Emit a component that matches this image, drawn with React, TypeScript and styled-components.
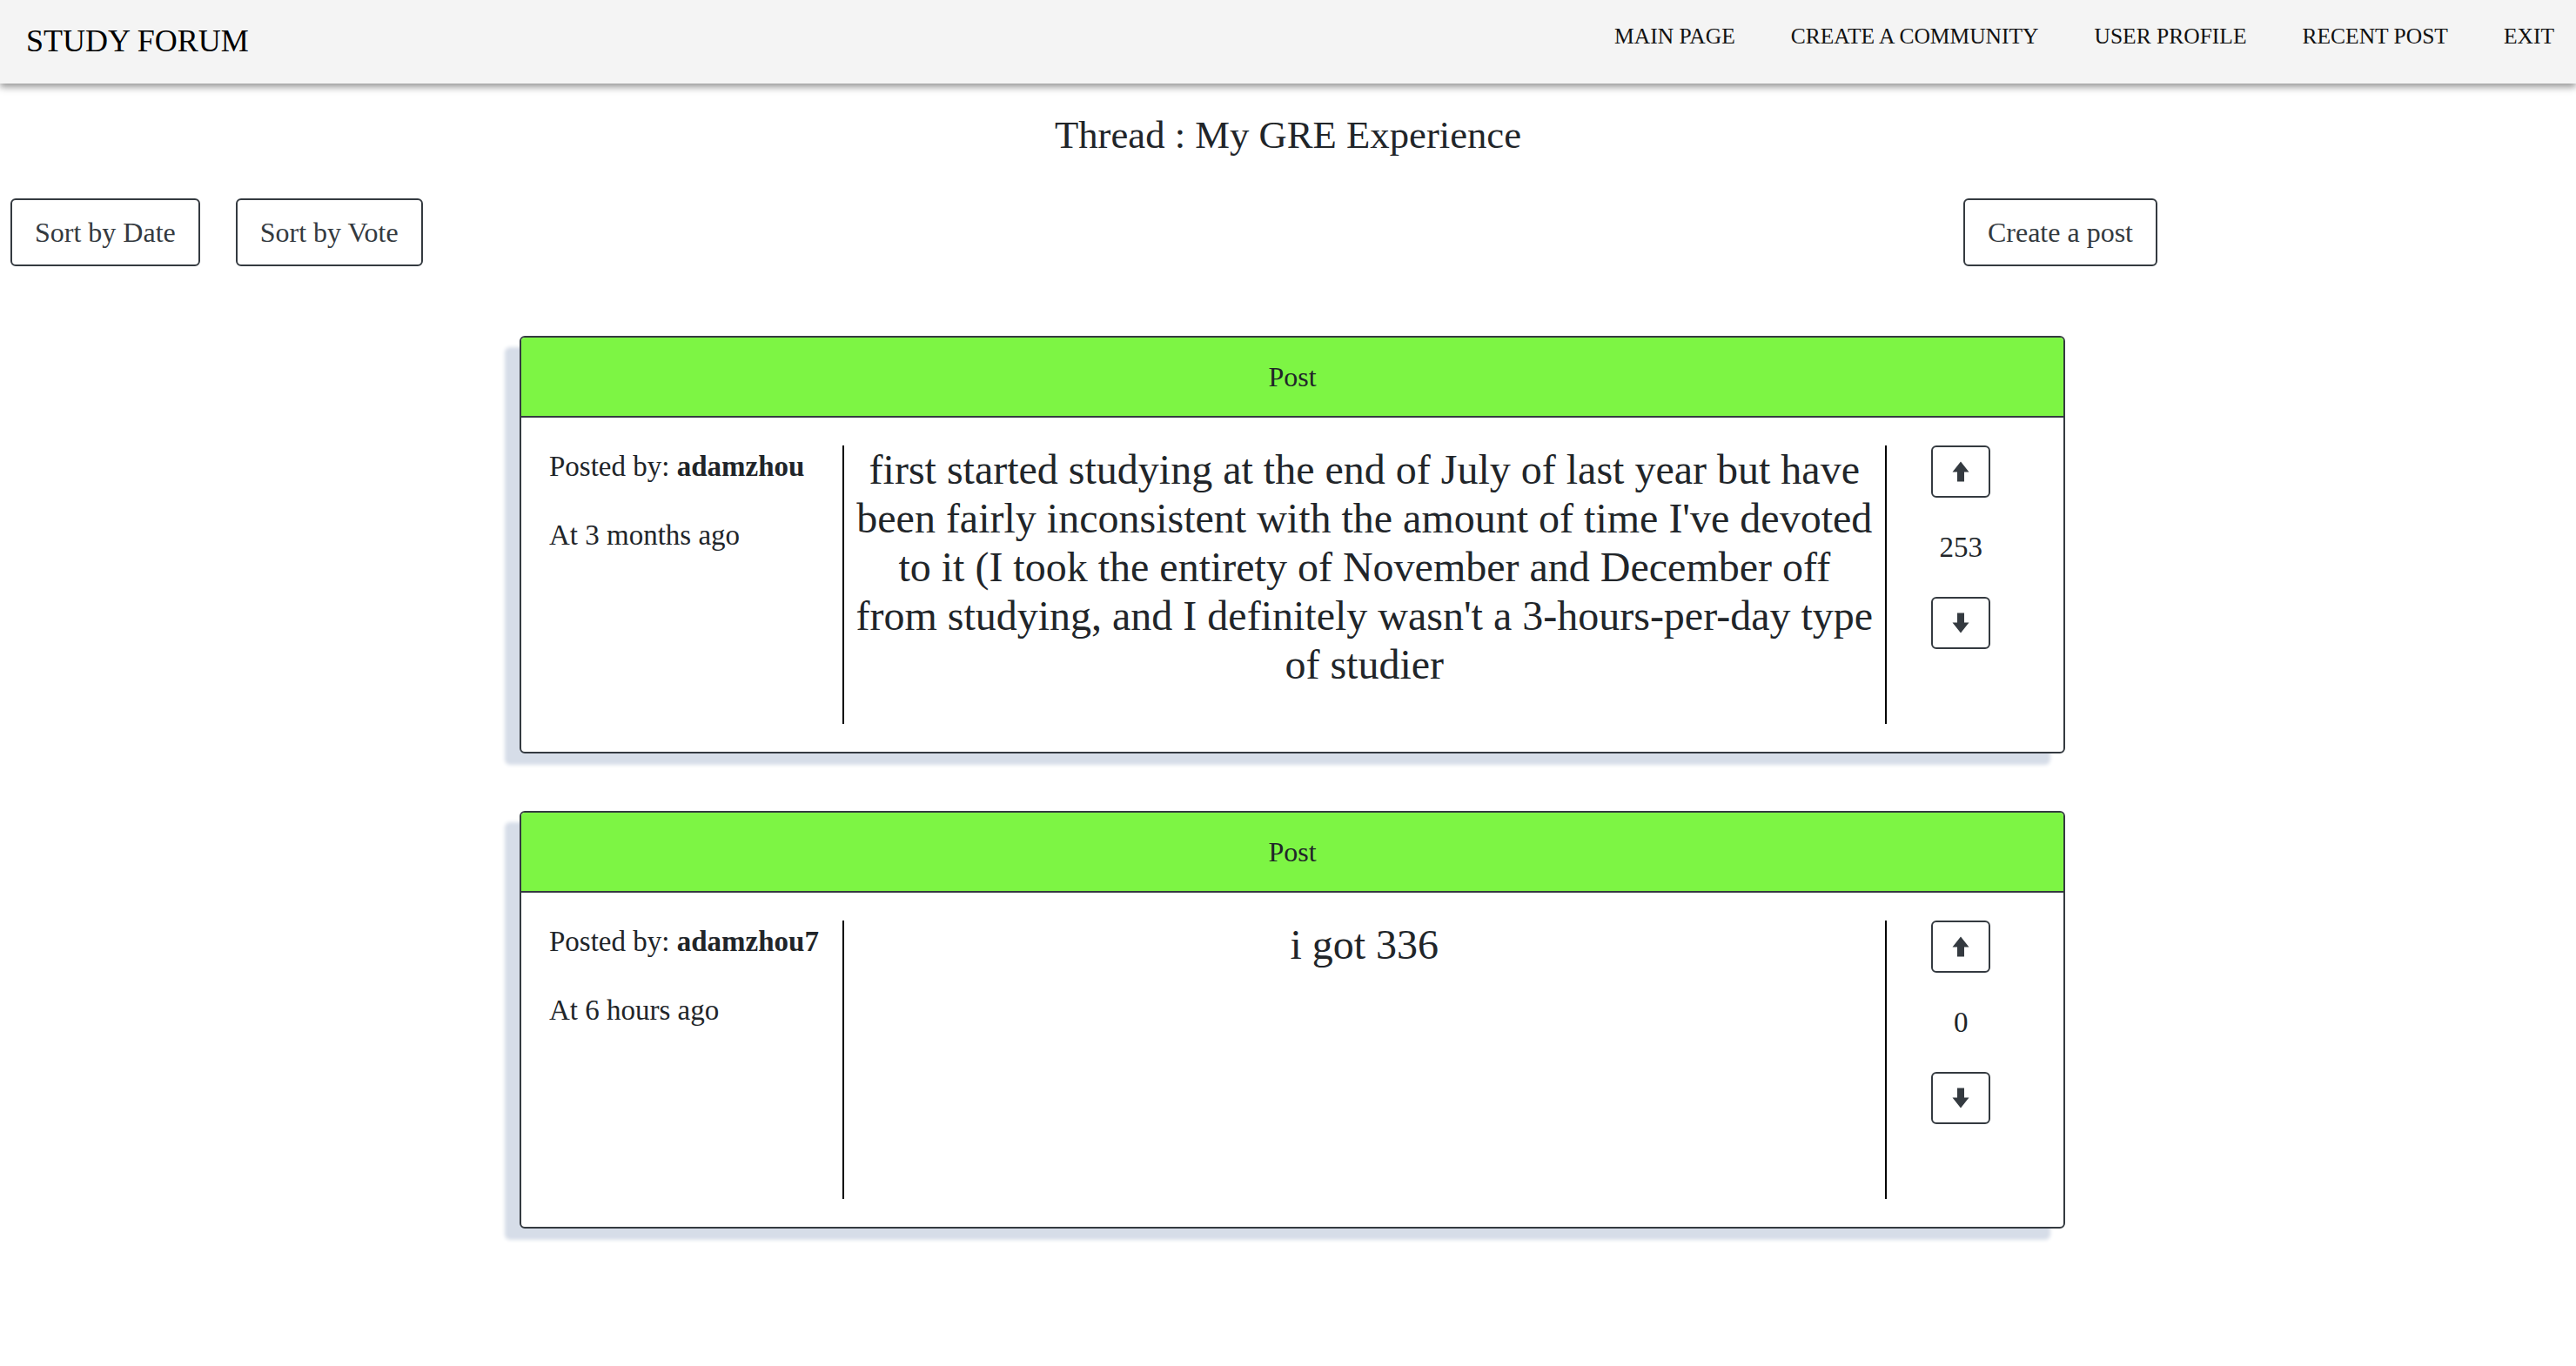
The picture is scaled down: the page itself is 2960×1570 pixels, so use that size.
import React from "react";
import styled, { createGlobalStyle } from "styled-components";

const GlobalStyle = createGlobalStyle`
  html, body {
    margin: 0;
    padding: 0;
    background: #ffffff;
    font-family: "Liberation Serif", "Times New Roman", serif;
    color: #212529;
  }
  * { box-sizing: border-box; }
`;

const Navbar = styled.header`
  position: relative;
  z-index: 2;
  height: 96px;
  background: #f4f4f4;
  box-shadow: 0 4px 8px rgba(0, 0, 0, 0.42);
  display: flex;
  align-items: flex-start;
  justify-content: space-between;
  padding: 27px 25px 0 30px;
`;

const Brand = styled.div`
  font-size: 36px;
  line-height: 41px;
  color: #000;
`;

const NavLinks = styled.nav`
  display: flex;
  gap: 64px;
`;

const NavLink = styled.a`
  font-size: 25.5px;
  line-height: 29px;
  color: #111;
  text-decoration: none;
  text-transform: uppercase;
  cursor: pointer;
`;

const Title = styled.h1`
  margin: 33px 0 0;
  text-align: center;
  font-weight: 400;
  font-size: 44.7px;
  line-height: 52px;
  color: #212529;
`;

const Toolbar = styled.div`
  margin-top: 47px;
  display: flex;
  justify-content: space-between;
  align-items: center;
  padding: 0 481px 0 12px;
`;

const ButtonGroup = styled.div`
  display: flex;
  gap: 41px;
`;

const OutlineButton = styled.button`
  font-family: "Liberation Serif", "Times New Roman", serif;
  font-size: 32px;
  line-height: 48px;
  padding: 13px 26px;
  color: #343a40;
  background: #fff;
  border: 2px solid #343a40;
  border-radius: 6px;
  cursor: pointer;
`;

const PostList = styled.main`
  margin-top: 80px;
  padding: 0 0 60px 10px;
  display: flex;
  flex-direction: column;
  align-items: center;
  gap: 66px;
`;

const Card = styled.article`
  width: 1776px;
  border: 2px solid #343a40;
  border-radius: 6px;
  background: #fff;
  box-shadow: -17px 13px 4px #d6dde8;
  overflow: hidden;
`;

const CardHeader = styled.div`
  background: #7df544;
  border-bottom: 2px solid #343a40;
  padding: 21px 0;
  text-align: center;
  font-size: 32px;
  line-height: 48px;
  color: #212529;
`;

const CardBody = styled.div`
  display: grid;
  grid-template-columns: 1.966fr 7fr 1fr;
  padding: 32px;
`;

const InfoCol = styled.div`
  height: 320px;
  font-size: 33px;
  line-height: 49px;
  color: #212529;
`;

const InfoLine = styled.p`
  margin: 0 0 30px;
  white-space: nowrap;

  b {
    font-weight: 700;
  }
`;

const ContentCol = styled.div`
  height: 320px;
  border-left: 2px solid #000;
  border-right: 2px solid #000;
  padding: 0 12px;
  text-align: center;
  font-size: 48px;
  line-height: 56px;
  color: #212529;
`;

const VoteCol = styled.div`
  display: flex;
  flex-direction: column;
  align-items: center;
  gap: 33px;
`;

const VoteButton = styled.button`
  width: 68px;
  height: 60px;
  padding: 0;
  display: flex;
  align-items: center;
  justify-content: center;
  background: #fff;
  border: 2px solid #343a40;
  border-radius: 6px;
  cursor: pointer;
`;

const VoteCount = styled.span`
  font-size: 33px;
  line-height: 48px;
  color: #212529;
`;

const Arrow = ({ down }: { down?: boolean }) => (
  <svg
    width="20"
    height="24"
    viewBox="0 0 20 24"
    style={down ? { transform: "rotate(180deg)" } : undefined}
    aria-hidden="true"
  >
    <path d="M10 0.5 L19.5 12.5 L14 12.5 L14 23.5 L6 23.5 L6 12.5 L0.5 12.5 Z" fill="#343a40" />
  </svg>
);

type Post = {
  id: number;
  author: string;
  time: string;
  body: string;
  votes: number;
};

const posts: Post[] = [
  {
    id: 1,
    author: "adamzhou",
    time: "3 months ago",
    body:
      "first started studying at the end of July of last year but have been fairly inconsistent with the amount of time I've devoted to it (I took the entirety of November and December off from studying, and I definitely wasn't a 3-hours-per-day type of studier",
    votes: 253,
  },
  {
    id: 2,
    author: "adamzhou7",
    time: "6 hours ago",
    body: "i got 336",
    votes: 0,
  },
];

const navItems = ["Main Page", "Create a Community", "User Profile", "Recent Post", "Exit"];

export default function App() {
  return (
    <>
      <GlobalStyle />
      <Navbar>
        <Brand>STUDY FORUM</Brand>
        <NavLinks>
          {navItems.map((item) => (
            <NavLink key={item}>{item}</NavLink>
          ))}
        </NavLinks>
      </Navbar>
      <Title>Thread : My GRE Experience</Title>
      <Toolbar>
        <ButtonGroup>
          <OutlineButton>Sort by Date</OutlineButton>
          <OutlineButton>Sort by Vote</OutlineButton>
        </ButtonGroup>
        <OutlineButton>Create a post</OutlineButton>
      </Toolbar>
      <PostList>
        {posts.map((p) => (
          <Card key={p.id}>
            <CardHeader>Post</CardHeader>
            <CardBody>
              <InfoCol>
                <InfoLine>
                  Posted by: <b>{p.author}</b>
                </InfoLine>
                <InfoLine>At {p.time}</InfoLine>
              </InfoCol>
              <ContentCol>{p.body}</ContentCol>
              <VoteCol>
                <VoteButton aria-label="Upvote">
                  <Arrow />
                </VoteButton>
                <VoteCount>{p.votes}</VoteCount>
                <VoteButton aria-label="Downvote">
                  <Arrow down />
                </VoteButton>
              </VoteCol>
            </CardBody>
          </Card>
        ))}
      </PostList>
    </>
  );
}
